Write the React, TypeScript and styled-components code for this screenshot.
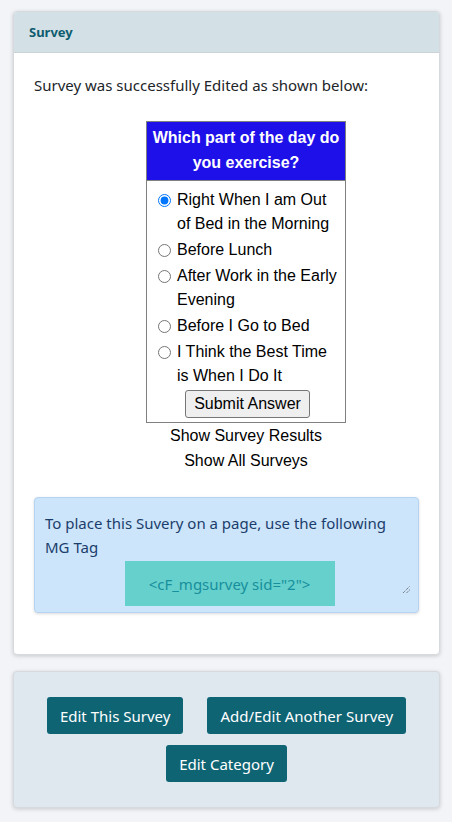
import React from "react";
import styled, { createGlobalStyle } from "styled-components";

const GlobalStyle = createGlobalStyle`
  html, body {
    margin: 0;
    padding: 0;
    background: #f3f4f7;
  }
  body {
    font-family: "Noto Sans", "Open Sans", sans-serif;
  }
`;

const Page = styled.div`
  padding: 11px 12px 15px 13px;
  display: flex;
  flex-direction: column;
  gap: 16px;
`;

const Card = styled.div<{ $bg?: string }>`
  background: ${(p) => p.$bg || "#ffffff"};
  border: 1px solid #d6dadf;
  border-radius: 4px;
  box-shadow: 0 1px 4px rgba(0, 0, 0, 0.18);
  overflow: hidden;
`;

const CardHeader = styled.div`
  background: #d3e0e6;
  height: 40px;
  display: flex;
  align-items: center;
  padding: 0 15px;
  font-weight: 700;
  font-size: 13px;
  color: #0e5c6e;
  border-bottom: 1px solid #c9d3d8;
`;

const CardBody = styled.div`
  padding: 22px 20px 41px 20px;
`;

const Intro = styled.p`
  margin: 0 0 26px 0;
  font-size: 15px;
  color: #212529;
`;

const SurveyBlock = styled.div`
  display: flex;
  flex-direction: column;
  align-items: center;
  padding-left: 39px;
  font-family: "Liberation Sans", Arial, sans-serif;
  font-size: 16px;
  color: #000;
`;

const SurveyTable = styled.div`
  width: 198px;
  border: 1px solid #808080;
`;

const SurveyTitle = styled.div`
  background: #1e10e8;
  color: #fff;
  font-weight: 700;
  text-align: center;
  line-height: 25px;
  padding: 3px 2px 5px;
  border-bottom: 1px solid #808080;
`;

const Options = styled.div`
  padding: 7px 8px 4px 11px;
  display: flex;
  flex-direction: column;
  gap: 2px;
`;

const Option = styled.label`
  display: flex;
  align-items: flex-start;
  gap: 6px;
  line-height: 24px;
`;

const Radio = styled.input`
  margin: 6px 0 0 0;
  width: 13px;
  height: 13px;
  flex-shrink: 0;
`;

const SubmitButton = styled.button`
  align-self: center;
  margin-top: 0;
  font-family: "Liberation Sans", Arial, sans-serif;
  font-size: 16px;
  line-height: 18px;
  padding: 4px 8px;
  background: #efefef;
  border: 1px solid #767676;
  border-radius: 3px;
  color: #000;
`;

const LinkGroup = styled.div`
  text-align: center;
`;

const LinkLine = styled.div`
  line-height: 25px;
`;

const TagBox = styled.div`
  position: relative;
  margin-top: 24px;
  background: #cce5fb;
  border: 1px solid #b6d4f2;
  border-radius: 4px;
  box-shadow: 0 1px 3px rgba(0, 0, 0, 0.15);
  padding: 13px 4px 6px 10px;
  color: #1b3d6b;
  font-size: 15px;
  line-height: 24px;
`;

const TagCode = styled.div`
  margin: 2px auto 0;
  width: 210px;
  height: 45px;
  background: #66d0cc;
  color: #178f9c;
  font-size: 15px;
  display: flex;
  align-items: center;
  justify-content: center;
`;

const Grip = styled.svg`
  position: absolute;
  right: 7px;
  bottom: 18px;
  width: 9px;
  height: 9px;
`;

const ButtonArea = styled.div`
  padding: 25px 20px 25px;
  display: flex;
  flex-wrap: wrap;
  justify-content: center;
  column-gap: 24px;
  row-gap: 11px;
`;

const ActionButton = styled.button`
  background: #0f6474;
  color: #fff;
  border: none;
  border-radius: 3px;
  height: 37px;
  padding: 0 13px;
  font-family: "Noto Sans", "Open Sans", sans-serif;
  font-size: 15px;
`;

const answers = [
  "Right When I am Out of Bed in the Morning",
  "Before Lunch",
  "After Work in the Early Evening",
  "Before I Go to Bed",
  "I Think the Best Time is When I Do It",
];

export default function App() {
  return (
    <>
      <GlobalStyle />
      <Page>
        <Card>
          <CardHeader>Survey</CardHeader>
          <CardBody>
            <Intro>Survey was successfully Edited as shown below:</Intro>
            <SurveyBlock>
              <SurveyTable>
                <SurveyTitle>Which part of the day do you exercise?</SurveyTitle>
                <Options>
                  {answers.map((a, i) => (
                    <Option key={a}>
                      <Radio type="radio" name="answer" defaultChecked={i === 0} />
                      <span>{a}</span>
                    </Option>
                  ))}
                  <SubmitButton>Submit Answer</SubmitButton>
                </Options>
              </SurveyTable>
              <LinkGroup>
                <LinkLine>Show Survey Results</LinkLine>
                <LinkLine>Show All Surveys</LinkLine>
              </LinkGroup>
            </SurveyBlock>
            <TagBox>
              To place this Suvery on a page, use the following MG Tag
              <TagCode>&lt;cF_mgsurvey sid="2"&gt;</TagCode>
              <Grip viewBox="0 0 9 9">
                <path d="M1 8 L8 1 M4.5 8 L8 4.5" stroke="#555" strokeWidth="1" strokeDasharray="1 1" />
              </Grip>
            </TagBox>
          </CardBody>
        </Card>
        <Card $bg="#dfe8ee">
          <ButtonArea>
            <ActionButton>Edit This Survey</ActionButton>
            <ActionButton>Add/Edit Another Survey</ActionButton>
            <ActionButton>Edit Category</ActionButton>
          </ButtonArea>
        </Card>
      </Page>
    </>
  );
}
